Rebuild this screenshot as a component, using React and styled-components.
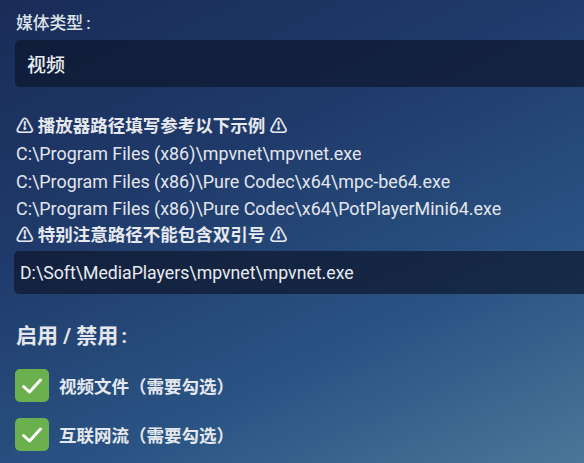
import React from "react";
import styled, { createGlobalStyle } from "styled-components";

const Global = createGlobalStyle`
  html, body { margin: 0; padding: 0; }
  body {
    width: 584px;
    height: 463px;
    overflow: hidden;
    font-family: Roboto, "Noto Sans CJK SC", sans-serif;
    background: linear-gradient(155deg, #1a2c58 0%, #1f3a6a 35%, #2a5484 70%, #4c7698 100%);
  }
`;

const Page = styled.div`
  display: flex;
  flex-direction: column;
  padding: 11px 0 0 15px;
  height: 463px;
  box-sizing: border-box;
  color: #e1e5ec;
`;

const Label = styled.div`
  font-size: 16.8px;
  font-weight: 500;
  line-height: 24px;
  padding-left: 1px;
  color: #dde2ea;
`;

const Colon = styled.span`
  margin-left: 3px;
`;

const Field = styled.div`
  margin-top: ${(p) => p.$mt}px;
  height: ${(p) => p.$h}px;
  display: flex;
  align-items: center;
  padding-left: ${(p) => p.$pl}px;
  margin-left: ${(p) => p.$ml || 0}px;
  background: rgba(14, 24, 46, 0.72);
  border-radius: 5px 0 0 5px;
  font-size: ${(p) => p.$fs}px;
  color: #e8ebf0;
  font-weight: ${(p) => p.$fw || 400};
`;

const Notes = styled.div`
  margin-top: 26px;
  display: flex;
  flex-direction: column;
  font-size: 17.9px;
  line-height: 27.25px;
  padding-left: 1px;
  color: #e3e6ec;
`;

const Warn = styled.div`
  font-weight: 600;
  font-size: 17.5px;
  color: #e6e9ee;
`;

const Heading = styled.div`
  margin-top: 30px;
  font-size: 21px;
  font-weight: 700;
  line-height: 24px;
  padding-left: 1px;
  color: #e4e8ee;
`;

const Checks = styled.div`
  margin-top: 21px;
  display: flex;
  flex-direction: column;
  gap: 16px;
`;

const CheckRow = styled.label`
  display: flex;
  align-items: center;
  gap: 10px;
  font-size: 17.5px;
  font-weight: 700;
  color: #e4e8ee;
`;

const Box = styled.span`
  width: 34px;
  height: 33px;
  border-radius: 5px;
  background: #6bb04f;
  display: flex;
  align-items: center;
  justify-content: center;
  flex: none;
`;

const Check = () => (
  <svg width="22" height="18" viewBox="0 0 22 18">
    <path d="M2.5 9.5 L8.5 15 L19.5 3" fill="none" stroke="#fff" strokeWidth="3" strokeLinecap="round" strokeLinejoin="round" />
  </svg>
);

export default function App() {
  return (
    <>
      <Global />
      <Page>
        <Label>媒体类型<Colon>:</Colon></Label>
        <Field $mt={5} $h={47} $pl={12} $fs={19} $fw={500}>视频</Field>
        <Notes>
          <Warn>⚠ 播放器路径填写参考以下示例 ⚠</Warn>
          <div>C:\Program Files (x86)\mpvnet\mpvnet.exe</div>
          <div>C:\Program Files (x86)\Pure Codec\x64\mpc-be64.exe</div>
          <div>C:\Program Files (x86)\Pure Codec\x64\PotPlayerMini64.exe</div>
          <Warn>⚠ 特别注意路径不能包含双引号 ⚠</Warn>
        </Notes>
        <Field $mt={2} $h={43} $pl={6} $ml={-1} $fs={17.7}>D:\Soft\MediaPlayers\mpvnet\mpvnet.exe</Field>
        <Heading>启用 / 禁用<Colon>:</Colon></Heading>
        <Checks>
          <CheckRow><Box><Check /></Box>视频文件（需要勾选）</CheckRow>
          <CheckRow><Box><Check /></Box>互联网流（需要勾选）</CheckRow>
        </Checks>
      </Page>
    </>
  );
}
